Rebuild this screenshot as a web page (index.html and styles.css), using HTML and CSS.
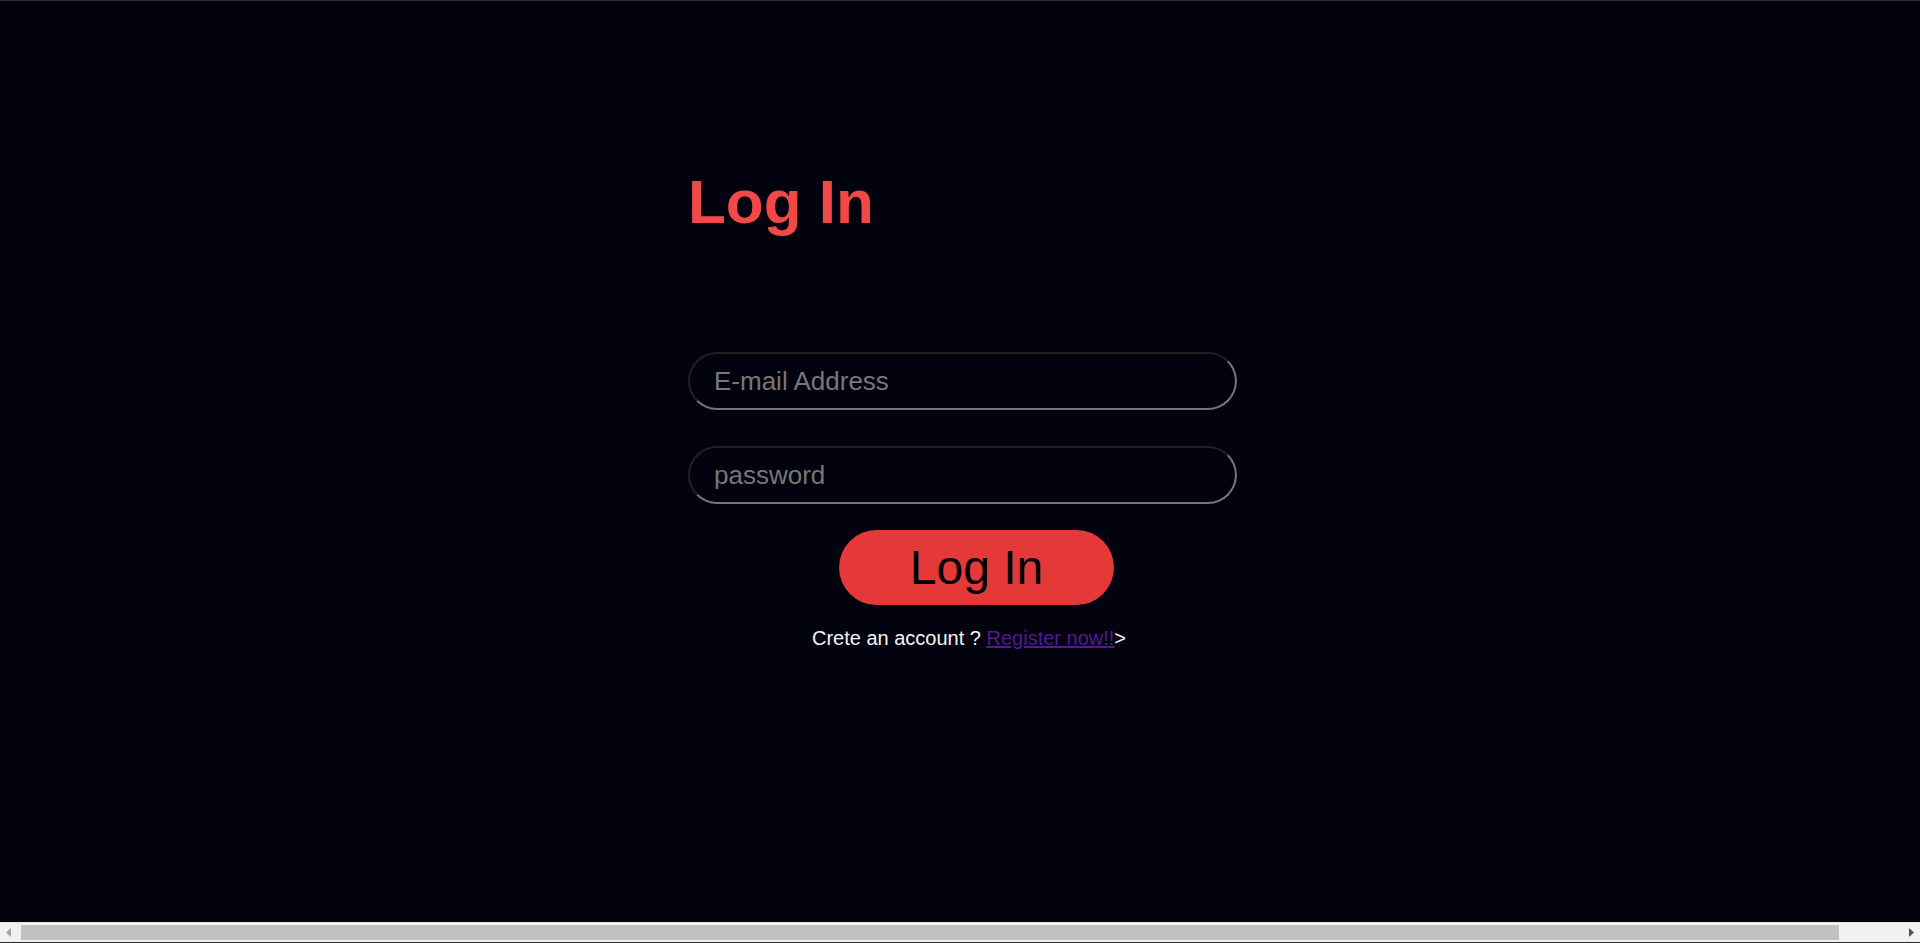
FILE: index.html
```html
<!DOCTYPE html>
<html lang="en">
<head>
<meta charset="utf-8">
<title>Log In</title>
<link rel="stylesheet" href="styles.css">
</head>
<body>
<div class="page">
  <div class="login">
    <h1 class="title">Log In</h1>
    <form class="form">
      <input class="field field-email" type="email" placeholder="E-mail Address">
      <input class="field field-pass" type="password" placeholder="password">
      <button class="btn" type="button">Log In</button>
      <p class="register">Crete an account ? <a class="register-link" href="#">Register now!!</a>&gt;</p>
    </form>
  </div>
</div>
<div class="hscroll" aria-hidden="true">
  <span class="hscroll-btn">
    <svg width="7" height="9" viewBox="0 0 7 9"><path d="M6 0 L6 9 L1 4.5 Z" fill="#a3a3a3"/></svg>
  </span>
  <span class="hscroll-track"><span class="hscroll-thumb"></span></span>
  <span class="hscroll-btn">
    <svg width="7" height="9" viewBox="0 0 7 9"><path d="M1 0 L1 9 L6 4.5 Z" fill="#505050"/></svg>
  </span>
</div>
</body>
</html>
```
FILE: styles.css
```css
html {
  background: #03020f;
}
body {
  margin: 0;
  font-family: "Liberation Sans", Arial, sans-serif;
  overflow: hidden;
}
.page {
  border-top: 1px solid #2b2e2d;
  padding-top: 164px;
  padding-left: 688px;
  box-sizing: border-box;
  height: 923px;
}
.login {
  width: 562px;
}
.title {
  margin: 0;
  font-size: 62px;
  line-height: 74px;
  font-weight: bold;
  color: #f24848;
}
.form {
  display: flex;
  flex-direction: column;
  align-items: flex-start;
  margin: 113px 0 0;
}
.field {
  box-sizing: border-box;
  width: 549px;
  height: 58px;
  border: 2px inset #767676;
  border-radius: 29px;
  background: transparent;
  padding: 0 0 0 24px;
  margin: 0;
  font-family: "Liberation Sans", Arial, sans-serif;
  font-size: 26px;
  color: #cfcfcf;
  outline: none;
}
.field::placeholder {
  color: #777777;
}
.field-pass {
  margin-top: 36px;
}
.btn {
  margin: 26px 0 0 151px;
  width: 275px;
  height: 75px;
  border: none;
  border-radius: 38px;
  background: #e53838;
  color: #000;
  font-family: "Liberation Sans", Arial, sans-serif;
  font-size: 48px;
  padding: 0;
}
.register {
  align-self: stretch;
  margin: 22px 0 0;
  text-align: center;
  font-size: 20px;
  line-height: 23px;
  color: #f4f4f4;
}
.register-link {
  color: #551a8b;
}
.hscroll {
  position: fixed;
  left: 0;
  right: 0;
  bottom: 0;
  height: 19px;
  display: flex;
  align-items: stretch;
  background: #f1f1f1;
  border-top: 1px solid #e6e6e6;
  border-bottom: 1px solid #2d2d2d;
}
.hscroll-btn {
  width: 17px;
  flex: none;
  display: flex;
  align-items: center;
  justify-content: center;
}
.hscroll-track {
  flex: 1;
  display: flex;
  padding: 2px 0;
  padding-right: 64px;
}
.hscroll-thumb {
  flex: 1;
  background: #c1c1c1;
  margin-left: 4px;
}
```
